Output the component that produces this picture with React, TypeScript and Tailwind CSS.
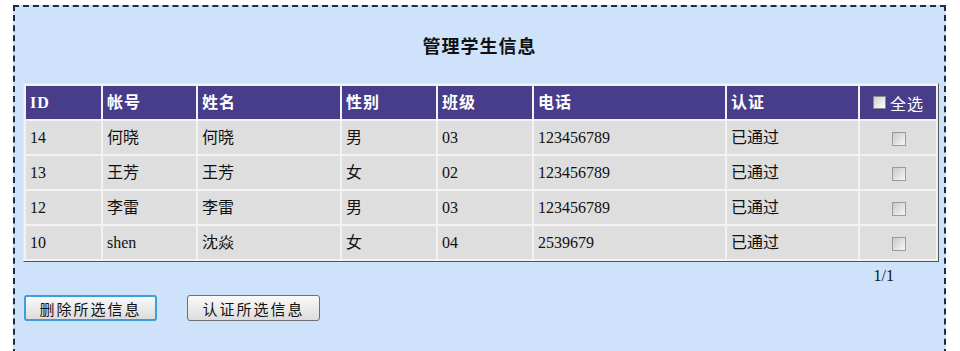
import React from "react";

type Student = {
  id: string;
  account: string;
  name: string;
  gender: string;
  cls: string;
  phone: string;
  status: string;
};

const students: Student[] = [
  { id: "14", account: "何晓", name: "何晓", gender: "男", cls: "03", phone: "123456789", status: "已通过" },
  { id: "13", account: "王芳", name: "王芳", gender: "女", cls: "02", phone: "123456789", status: "已通过" },
  { id: "12", account: "李雷", name: "李雷", gender: "男", cls: "03", phone: "123456789", status: "已通过" },
  { id: "10", account: "shen", name: "沈焱", gender: "女", cls: "04", phone: "2539679", status: "已通过" },
];

const headers = ["ID", "帐号", "姓名", "性别", "班级", "电话", "认证"];
const widths = [75, 93, 142, 94, 94, 191, 131, 76];

const serif = { fontFamily: '"Liberation Serif", "Noto Sans CJK SC", serif' };
const sans = { fontFamily: '"Noto Sans CJK SC", "Liberation Sans", sans-serif' };

function Box({ light }: { light?: boolean }) {
  return (
    <span
      className={
        light
          ? "inline-block w-[13px] h-[13px] border border-[#8a8a8a] bg-gradient-to-br from-[#d0d0d0] to-white align-middle"
          : "inline-block w-[14px] h-[14px] border border-[#9a9a9a] bg-gradient-to-br from-[#c8c8c8] to-[#f7f7f7] align-middle"
      }
    />
  );
}

export default function App() {
  return (
    <div className="w-[960px] h-[351px] bg-white overflow-hidden" style={serif}>
      <div className="ml-[13px] mt-[5px] w-[933px] h-[360px] border-2 border-dashed border-[#1d2a4a] bg-[#cfe2fb]">
        <h1
          className="text-center text-[18px] font-bold tracking-[1px] text-[#111] pt-[26px] pb-[26px] leading-[24px]"
          style={sans}
        >
          管理学生信息
        </h1>
        <div className="ml-[8px] w-[916px]">
          <table className="table-fixed border-separate border-spacing-[2px] border border-t-[#e8e8e8] border-l-[#e8e8e8] border-b-[#555] border-r-[#555] bg-[#f2f2f2] w-[916px]">
            <colgroup>
              {widths.map((w, i) => (
                <col key={i} style={{ width: w }} />
              ))}
            </colgroup>
            <thead>
              <tr className="h-[33px] bg-[#483d8b] text-white">
                {headers.map((h) => (
                  <th key={h} className="text-left font-bold text-[16px] pl-[4px] p-0 leading-[20px] tracking-[1px]">
                    {h}
                  </th>
                ))}
                <th className="text-left font-normal text-[16px] pl-[13px] p-0 leading-[20px]" style={sans}>
                  <span className="inline-flex items-center gap-[4px]">
                    <Box light />
                    <span className="tracking-[1px]">全选</span>
                  </span>
                </th>
              </tr>
            </thead>
            <tbody>
              {students.map((s) => (
                <tr key={s.id} className="h-[33px] bg-[#dedede] text-[#111] text-[16px]">
                  <td className="pl-[4px] p-0">{s.id}</td>
                  <td className="pl-[4px] p-0">{s.account}</td>
                  <td className="pl-[4px] p-0">{s.name}</td>
                  <td className="pl-[4px] p-0">{s.gender}</td>
                  <td className="pl-[4px] p-0">{s.cls}</td>
                  <td className="pl-[4px] p-0">{s.phone}</td>
                  <td className="pl-[4px] p-0">{s.status}</td>
                  <td className="p-0 text-center">
                    <span className="relative left-[1px]">
                      <Box />
                    </span>
                  </td>
                </tr>
              ))}
            </tbody>
          </table>
          <div className="flex justify-end pr-[45px] pt-[4px] text-[16px] text-[#111] leading-[20px]">1/1</div>
        </div>
        <div className="flex gap-[30px] ml-[9px] mt-[9px]" style={sans}>
          <button className="w-[133px] h-[26px] rounded-[3px] border-2 border-[#3c9fd8] bg-gradient-to-b from-[#fafafa] to-[#dcdcdc] text-[15px] tracking-[2px] text-[#111] leading-none">
            删除所选信息
          </button>
          <button className="w-[133px] h-[26px] rounded-[3px] border border-[#707070] bg-gradient-to-b from-[#fafafa] to-[#dcdcdc] text-[15px] tracking-[2px] text-[#111] leading-none">
            认证所选信息
          </button>
        </div>
      </div>
    </div>
  );
}
